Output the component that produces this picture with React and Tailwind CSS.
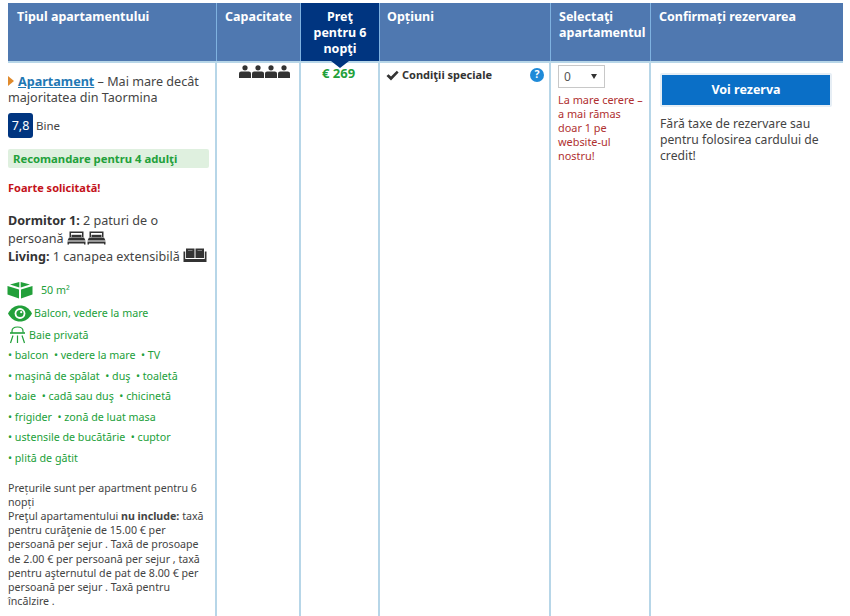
import React from "react";

const Person = () => (
  <svg width="12" height="13" viewBox="0 0 12 13" fill="#333">
    <circle cx="6" cy="2.8" r="2.6" />
    <path d="M0 13V8.6C0 7.2 1 6.4 2.2 6.4H9.8C11 6.4 12 7.2 12 8.6V13Z" />
  </svg>
);

const Bed = () => (
  <svg width="19" height="14" viewBox="0 0 19 14" fill="#333" className="inline-block align-[-2px]">
    <path d="M2.5 0.5H16.5V6H15V2H4V6H2.5Z" />
    <path d="M4.5 3.8H14.5V6.2H4.5Z" />
    <path d="M2 6.5H17L18.5 9.5H0.5Z" />
    <path d="M0.5 10.5H18.5V13.5H17V12.5H2V13.5H0.5Z" />
  </svg>
);

const Sofa = () => (
  <svg width="24" height="15" viewBox="0 0 24 15" fill="#333" className="inline-block align-[-2px]">
    <path d="M3 0.5H11.5V10H3Z" />
    <path d="M12.5 0.5H21V10H12.5Z" />
    <path d="M0.5 3.5H2.2V11H21.8V3.5H23.5V14H0.5Z" />
    <path d="M5 2.2H9.5V2.9H5ZM14.5 2.2H19V2.9H14.5Z" fill="#999" />
  </svg>
);

const Cube = () => (
  <svg width="26" height="17" viewBox="0 0 26 17" fill="#22a03a">
    <path d="M12.3 0L3 2.6L12.3 5.6Z" />
    <path d="M13.7 0L23 2.6L13.7 5.6Z" />
    <path d="M0.5 4L12 7.6V16.5L0.5 12.6Z" />
    <path d="M25.5 4L14 7.6V16.5L25.5 12.6Z" />
  </svg>
);

const Eye = () => (
  <svg width="24" height="17" viewBox="0 0 24 17">
    <path d="M0 8.5C3 3 7 0.5 12 0.5C17 0.5 21 3 24 8.5C21 14 17 16.5 12 16.5C7 16.5 3 14 0 8.5Z" fill="#22a03a" />
    <circle cx="12" cy="8.5" r="5.4" fill="#fff" />
    <circle cx="12" cy="8.5" r="3.6" fill="#22a03a" />
    <circle cx="13.2" cy="7.2" r="1.1" fill="#fff" />
  </svg>
);

const Shower = () => (
  <svg width="19" height="18" viewBox="0 0 19 18" fill="none" stroke="#22a03a" strokeWidth="1.2">
    <path d="M4 7V5C4 2.5 6 1 9.5 1C13 1 15 2.5 15 5V6.5" />
    <path d="M2 7H17" strokeWidth="1.6" />
    <path d="M5 9.5L2.5 17M9.5 9.5V17M14 9.5L16.5 17" />
  </svg>
);

const Check = () => (
  <svg width="13" height="11" viewBox="0 0 13 11" fill="#333">
    <path d="M0.5 6L2.5 4.2L5 6.6L10.8 0.8L12.6 2.4L5 10.4Z" />
  </svg>
);

const Amenities = [
  "• balcon  • vedere la mare  • TV",
  "• maşină de spălat  • duş  • toaletă",
  "• baie  • cadă sau duş  • chicinetă",
  "• frigider  • zonă de luat masa",
  "• ustensile de bucătărie  • cuptor",
  "• plită de gătit",
];

const Head = ({ children, className = "" }) => (
  <div className={`bg-[#4f78b0] text-white font-bold text-[12.5px] leading-[16px] pt-[6px] border-r border-[#7fb2e0] ${className}`}>
    {children}
  </div>
);

export default function App() {
  return (
    <div
      className="w-[850px] h-[616px] overflow-hidden bg-white text-[#444] pl-2 pt-[3px]"
      style={{ fontFamily: '"Noto Sans", "Open Sans", sans-serif' }}
    >
      <div className="grid grid-cols-[209px_84px_79px_171px_100px_192px] grid-rows-[58px_auto] w-[835px]">
        {/* header row */}
        <Head className="pl-[9px]">Tipul apartamentului</Head>
        <Head className="pl-2">Capacitate</Head>
        <div className="relative z-10 bg-[#003580] text-white font-bold text-[12.5px] leading-[16px] pt-[6px] text-center px-2 border-r border-[#7fb2e0]">
          Preţ pentru 6 nopţi
          <div className="absolute left-[30px] -bottom-[7px] w-0 h-0 border-x-[9px] border-x-transparent border-t-[7px] border-t-[#003580]" />
        </div>
        <Head className="pl-[7px]">Opțiuni</Head>
        <Head className="pl-2">Selectaţi apartamentul</Head>
        <div className="bg-[#4f78b0] text-white font-bold text-[12.5px] leading-[16px] pt-[6px] pl-2">Confirmați rezervarea</div>

        {/* room column */}
        <div className="border-r-2 border-t-2 border-[#b7d6e8] h-[560px] pt-[11px] text-[12.6px] leading-[16px]">
          <p>
            <span className="inline-block w-0 h-0 mr-[4px] border-y-[5px] border-y-transparent border-l-[6px] border-l-[#e08a2c]" />
            <span className="font-bold text-[#1f78b4] underline">Apartament</span> – Mai mare decât majoritatea din Taormina
          </p>
          <div className="flex items-center gap-[3px] mt-[7px] text-[11.5px]">
            <span className="w-[25px] h-[25px] rounded-[3px] bg-[#003580] text-white text-[12.5px] flex items-center justify-center">7,8</span>
            Bine
          </div>
          <div className="mt-[11px] mr-[6px] h-[19px] bg-[#dff0df] rounded-[2px] pl-[5px] text-[11.3px] leading-[19px] font-bold text-[#22a03a]">
            Recomandare pentru 4 adulţi
          </div>
          <p className="mt-[12px] text-[11px] font-bold text-[#c4121a]">Foarte solicitată!</p>
          <div className="mt-[16px] leading-[18px]">
            <p>
              <b className="text-[#333]">Dormitor 1:</b> 2 paturi de o persoană <Bed /><span className="inline-block w-px" /><Bed />
            </p>
            <p>
              <b className="text-[#333]">Living:</b> 1 canapea extensibilă <Sofa />
            </p>
          </div>
          <div className="mt-[15px] text-[10.7px] text-[#22a03a] leading-[20.6px]">
            <div className="flex items-center gap-[8px] h-[19px] -ml-px"><Cube /> 50 m²</div>
            <div className="flex items-center gap-[2px] h-[23px] mt-[2px]"><Eye /> Balcon, vedere la mare</div>
            <div className="flex items-center gap-[2px] h-[20px]"><Shower /> Baie privată</div>
            {Amenities.map((a) => (
              <div key={a} className="whitespace-pre">{a}</div>
            ))}
          </div>
          <div className="mt-[12px] text-[10.65px] leading-[14.2px] pr-[4px]">
            <p>Prețurile sunt per apartment pentru 6 nopți</p>
            <p>
              Preţul apartamentului <b>nu include:</b> taxă pentru curăţenie de 15.00 € per persoană per sejur . Taxă de prosoape de 2.00 € per persoană per sejur , taxă pentru aşternutul de pat de 8.00 € per persoană per sejur . Taxă pentru încălzire .
            </p>
          </div>
        </div>

        {/* capacity */}
        <div className="border-r-2 border-t-2 border-[#b7d6e8] pl-[22px] pt-[2px]">
          <div className="flex gap-px">
            <Person /><Person /><Person /><Person />
          </div>
        </div>

        {/* price */}
        <div className="border-r-2 border-t-2 border-[#b7d6e8] pt-[1px] pr-[2px] text-center text-[13px] font-bold text-[#22a03a]">
          € 269
        </div>

        {/* options */}
        <div className="border-r-2 border-t-2 border-[#b7d6e8] pt-[4px] pl-[6px] pr-[5px]">
          <div className="flex items-center gap-[3px] text-[11px] font-bold text-[#333]">
            <Check />
            Condiţii speciale
            <span className="ml-auto w-[14px] h-[14px] rounded-full bg-[#1f8ad8] text-white text-[10.5px] flex items-center justify-center">?</span>
          </div>
        </div>

        {/* select */}
        <div className="border-r-2 border-t-2 border-[#b7d6e8] pl-[7px] pr-[5px] pt-[2px]">
          <div className="w-[47px] h-[23px] border border-[#c8c8c8] flex items-center justify-between pl-[5px] pr-[7px] text-[12px] text-[#555]">
            0
            <span className="w-0 h-0 border-x-[3.5px] border-x-transparent border-t-[5px] border-t-[#333]" />
          </div>
          <p className="mt-[5px] text-[10.9px] leading-[14px] text-[#b03030]">
            La mare cerere – a mai rămas doar 1 pe website-ul nostru!
          </p>
        </div>

        {/* confirm */}
        <div className="border-t-2 border-[#b7d6e8] pl-[9px] pt-[10px] pr-[10px]">
          <div className="w-[172px] h-[34px] border-[2px] border-[#e6eef5] rounded-[2px]">
            <button className="w-full h-full bg-[#0a6fc7] text-white font-bold text-[12.5px] pt-px">Voi rezerva</button>
          </div>
          <p className="mt-[9px] text-[12.2px] leading-[16px]">
            Fără taxe de rezervare sau pentru folosirea cardului de credit!
          </p>
        </div>
      </div>
    </div>
  );
}
